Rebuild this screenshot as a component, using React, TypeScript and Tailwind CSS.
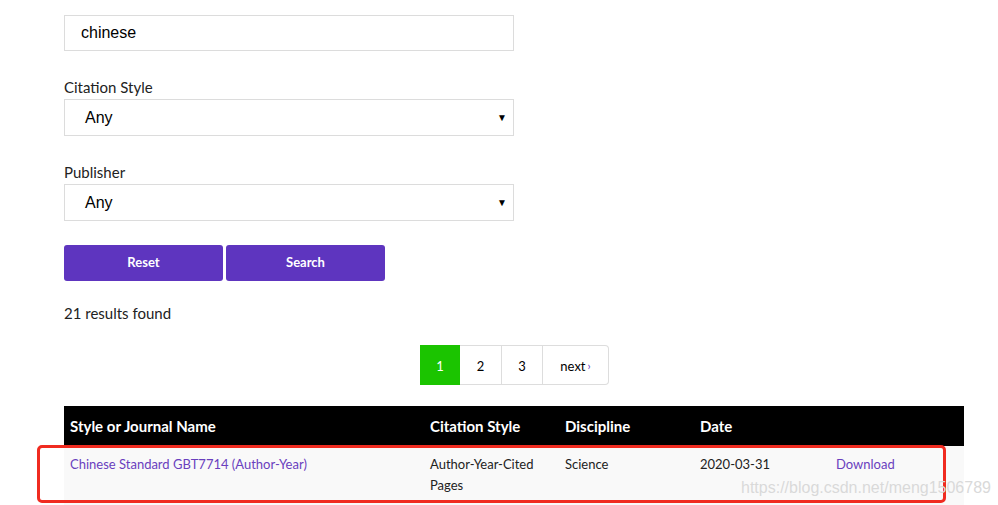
import React from "react";

export default function App() {
  const font = { fontFamily: "Lato, 'Open Sans', sans-serif" };
  return (
    <div className="relative w-[998px] h-[505px] overflow-hidden bg-white text-[#222]" style={font}>
      <div className="pl-[64px] pt-[15px]">
        <div className="w-[450px] h-[36px] border border-[#dcdcdc] flex items-center pl-[16px] text-[16px] text-black" style={{ fontFamily: "'Liberation Sans', Arial, sans-serif" }}>
          chinese
        </div>
        <div className="mt-[28px] text-[15px] leading-[16px] h-[20px] text-[#222]">Citation Style</div>
        <div className="w-[450px] h-[37px] border border-[#dcdcdc] flex items-center justify-between pl-[20px] pr-[6px] text-[16px] text-black" style={{ fontFamily: "'Liberation Sans', Arial, sans-serif" }}>
          <span>Any</span>
          <span className="text-[10px]">▼</span>
        </div>
        <div className="mt-[28px] text-[15px] leading-[16px] h-[20px] text-[#222]">Publisher</div>
        <div className="w-[450px] h-[37px] border border-[#dcdcdc] flex items-center justify-between pl-[20px] pr-[6px] text-[16px] text-black" style={{ fontFamily: "'Liberation Sans', Arial, sans-serif" }}>
          <span>Any</span>
          <span className="text-[10px]">▼</span>
        </div>
        <div className="mt-[24px] flex gap-[3px]">
          <button className="w-[159px] h-[36px] rounded-[3px] bg-[#5e35bf] text-white text-[13px] font-bold">Reset</button>
          <button className="w-[159px] h-[36px] rounded-[3px] bg-[#5e35bf] text-white text-[13px] font-bold">Search</button>
        </div>
        <div className="mt-[23px] text-[15px] leading-[18px] text-[#222]">21 results found</div>
        <div className="mt-[23px] flex w-[900px] justify-center">
          <div className="flex h-[40px] text-[13px] text-black ml-[1px] pt-[2px]">
            <div className="w-[40px] h-[40px] -mt-[2px] bg-[#1bc400] text-white flex items-center justify-center pt-[3px]">1</div>
            <div className="w-[42px] h-[40px] -mt-[2px] border border-[#dddddd] border-l-0 flex items-center justify-center pt-[3px]">2</div>
            <div className="w-[41px] h-[40px] -mt-[2px] border border-[#dddddd] border-l-0 flex items-center justify-center pt-[3px]">3</div>
            <div className="w-[66px] h-[40px] -mt-[2px] border border-[#dddddd] border-l-0 rounded-r-[4px] flex items-center justify-center pt-[3px]">next<span className="ml-[2px] text-[11px] text-[#5e35bf]">›</span></div>
          </div>
        </div>
        <div className="mt-[21px] w-[900px]">
          <div className="h-[40px] bg-black text-white font-bold text-[15px] flex items-center">
            <div className="w-[366px] pl-[6px]">Style or Journal Name</div>
            <div className="w-[135px]">Citation Style</div>
            <div className="w-[135px]">Discipline</div>
            <div className="w-[136px]">Date</div>
            <div className="flex-1"></div>
          </div>
          <div className="h-[70px] bg-[#f9f9f9] text-[13px] leading-[21px] text-[#222] flex pt-[8px]">
            <div className="w-[366px] pl-[6px] text-[#6a3fbe]">Chinese Standard GBT7714 (Author-Year)</div>
            <div className="w-[135px]">Author-Year-Cited<br />Pages</div>
            <div className="w-[135px]">Science</div>
            <div className="w-[136px]">2020-03-31</div>
            <div className="flex-1 text-[#6a3fbe]">Download</div>
          </div>
        </div>
      </div>
      <div className="absolute left-[37px] top-[445px] w-[909px] h-[58px] border-[3px] border-[#f02b20] rounded-[5px] pointer-events-none"></div>
      <div className="absolute left-[741px] top-[476px] text-[16px] text-[#d9d9d9]" style={{ fontFamily: "'Liberation Sans', Arial, sans-serif" }}>https://blog.csdn.net/meng1506789</div>
    </div>
  );
}
